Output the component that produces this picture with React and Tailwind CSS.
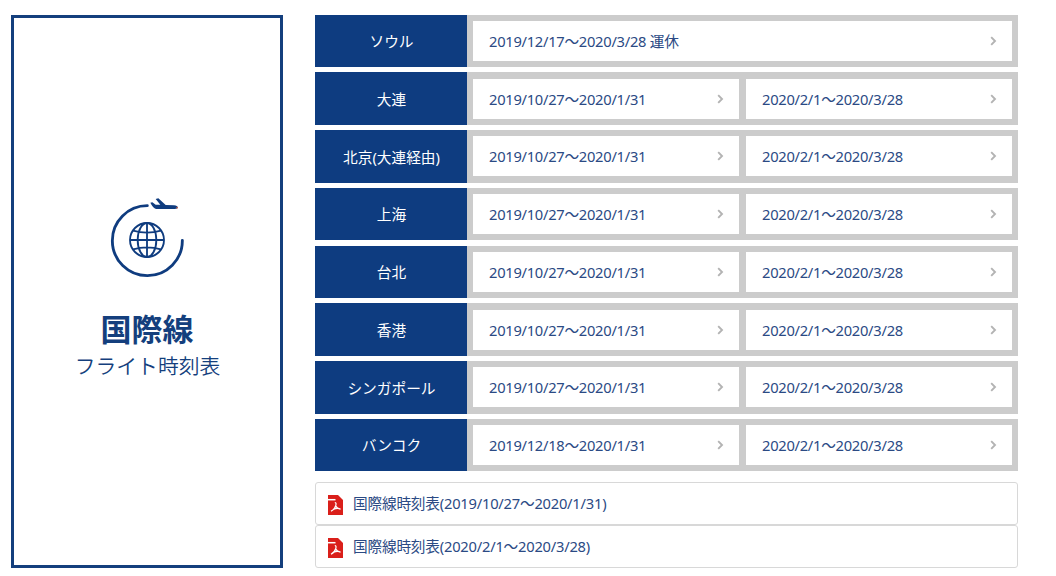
const EARLY = "2019/10/27〜2020/1/31";
const LATE = "2020/2/1〜2020/3/28";

const routes = [
  { name: "ソウル", periods: ["2019/12/17〜2020/3/28 運休"] },
  { name: "大連", periods: [EARLY, LATE] },
  { name: "北京(大連経由)", periods: [EARLY, LATE] },
  { name: "上海", periods: [EARLY, LATE] },
  { name: "台北", periods: [EARLY, LATE] },
  { name: "香港", periods: [EARLY, LATE] },
  { name: "シンガポール", periods: [EARLY, LATE] },
  { name: "バンコク", periods: ["2019/12/18〜2020/1/31", LATE] },
];

const pdfs = ["国際線時刻表(2019/10/27〜2020/1/31)", "国際線時刻表(2020/2/1〜2020/3/28)"];

function GlobeIcon() {
  return (
    <svg className="ml-[6px] h-[95px] w-[100px]" viewBox="0 0 300 285" fill="none" stroke="#0f3c7f">
      <path d="M142 47A105 105 0 1 0 247 151" strokeWidth="8.5" strokeLinecap="round" />
      <g strokeWidth="5.5">
        <circle cx="141" cy="150" r="51" />
        <ellipse cx="141" cy="150" rx="28" ry="51" />
        <path d="M141 99V201M90 150H192M99 122Q141 134 183 122M99 178Q141 166 183 178" />
      </g>
      <path
        d="M151 38L157 37L167 44L181 44L167 27L175 25L197 45L222 46Q233 47 233 52Q233 57 224 57L168 57Q159 54 151 38Z"
        fill="#0f3c7f"
        stroke="none"
      />
      <circle cx="231" cy="53" r="2.5" fill="#b4533f" stroke="none" />
    </svg>
  );
}

function Chevron() {
  return (
    <svg className="h-[10px] w-[7px] shrink-0" viewBox="0 0 7 10" fill="none" stroke="#b3b3b3" strokeWidth="1.9">
      <path d="M1.2 1.2L5 5L1.2 8.8" />
    </svg>
  );
}

function PdfIcon() {
  return (
    <svg className="mt-1 h-5 w-[15px] shrink-0" viewBox="0 0 15 20">
      <path d="M0 0H10L15 5V20H0Z" fill="#da1f1a" />
      <path d="M0 4.7H7.5" stroke="#fff" strokeWidth="1.5" />
      <path
        d="M6.8 7.5Q8.6 7.6 7.8 10.5Q6.8 14.2 3 16.3M7.8 11Q8.8 13.6 12.6 14.2M5.8 14.2Q8.5 13 11.5 13.6"
        fill="none"
        stroke="#fff"
        strokeWidth="1.2"
      />
    </svg>
  );
}

function Period({ children }) {
  return (
    <a className="flex h-10 flex-1 items-center justify-between bg-white pr-[15px] pl-4 text-[14.7px] tracking-[-0.27px] text-[#2b4a84]">
      <span>{children}</span>
      <Chevron />
    </a>
  );
}

export default function App() {
  return (
    <div className="flex h-[576px] w-[1056px] gap-8 overflow-hidden bg-white pt-[14.72px] pl-[11px] font-['Noto_Sans','Noto_Sans_CJK_JP',sans-serif]">
      <section className="flex h-[553px] w-[272px] flex-col items-center border-[3px] border-[#143f7d] pt-[172px] text-[#143f7d]">
        <GlobeIcon />
        <h1 className="mt-[21px] text-[31px] leading-[46px] font-bold">国際線</h1>
        <p className="-mt-px pl-px text-[20.8px] leading-[30px] font-[350]">フライト時刻表</p>
      </section>

      <div className="w-[703px]">
        <ul className="flex flex-col gap-[5.06px]">
          {routes.map((route) => (
            <li key={route.name} className="flex h-[52.66px] bg-[#ccc]">
              <div className="flex w-[152px] items-center justify-center bg-[#0e3c80] pt-[0.6px] pl-px text-[14.7px] text-white">
                {route.name}
              </div>
              <div className="flex flex-1 gap-[7px] px-[6px] pt-[6.3px]">
                {route.periods.map((period) => (
                  <Period key={period}>{period}</Period>
                ))}
              </div>
            </li>
          ))}
        </ul>

        <ul className="mt-[11px]">
          {pdfs.map((pdf) => (
            <li
              key={pdf}
              className="flex h-[43px] items-center gap-[10px] rounded-[3px] border border-[#d8d8d8] pb-0.5 pl-3 text-[14.7px] tracking-[-0.22px] text-[#2b4a84]"
            >
              <PdfIcon />
              <span>{pdf}</span>
            </li>
          ))}
        </ul>
      </div>
    </div>
  );
}
